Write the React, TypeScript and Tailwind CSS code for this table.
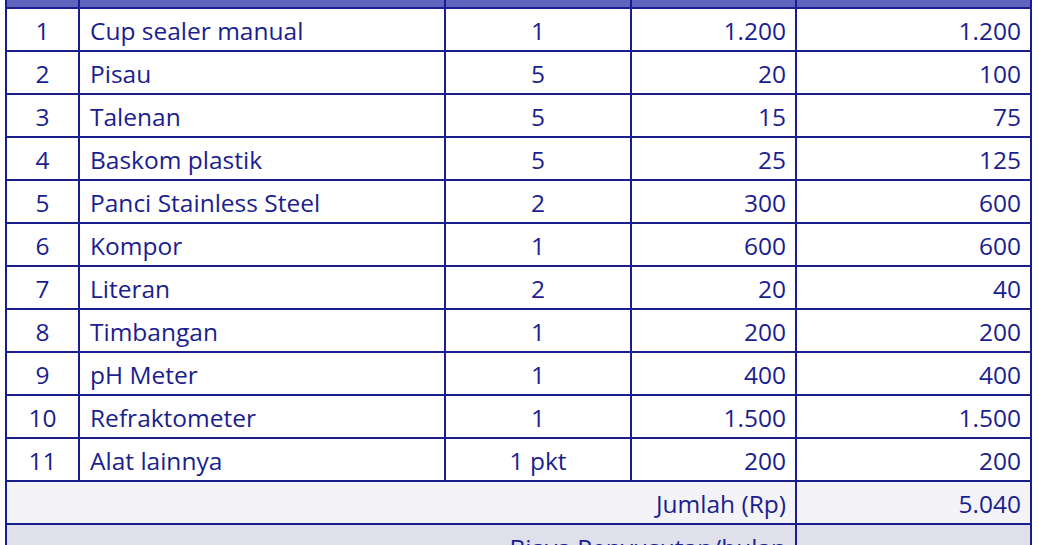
const rows: [string, string, string, string, string][] = [
  ["1", "Cup sealer manual", "1", "1.200", "1.200"],
  ["2", "Pisau", "5", "20", "100"],
  ["3", "Talenan", "5", "15", "75"],
  ["4", "Baskom plastik", "5", "25", "125"],
  ["5", "Panci Stainless Steel", "2", "300", "600"],
  ["6", "Kompor", "1", "600", "600"],
  ["7", "Literan", "2", "20", "40"],
  ["8", "Timbangan", "1", "200", "200"],
  ["9", "pH Meter", "1", "400", "400"],
  ["10", "Refraktometer", "1", "1.500", "1.500"],
  ["11", "Alat lainnya", "1 pkt", "200", "200"],
];

const cols = "grid grid-cols-[73px_366px_186px_165px_233px]";
const line = "border-r-2 border-[#1a1d8c]";

export default function App() {
  return (
    <div className="w-[1038px] h-[545px] overflow-hidden bg-white font-['Open_Sans',sans-serif] text-[24.5px] text-[#1a1e8e]">
      <div className="ml-[5px] w-[1027px] border-x-2 border-[#1a1d8c]">
        {/* tail of the header row */}
        <div className={`${cols} h-[9px] border-b-2 border-[#1a1d8c] bg-[#5e63bd]`}>
          <div className={line} />
          <div className={line} />
          <div className={line} />
          <div className={line} />
          <div />
        </div>

        {rows.map(([no, name, qty, price, total]) => (
          <div key={no} className={`${cols} h-[43px] border-b-2 border-[#1a1d8c]`}>
            <div className={`flex items-center justify-center pt-[4px] ${line}`}>{no}</div>
            <div className={`flex items-center pl-[10px] pt-[4px] ${line}`}>{name}</div>
            <div className={`flex items-center justify-center pt-[4px] ${line}`}>{qty}</div>
            <div className={`flex items-center justify-end pr-[9px] pt-[4px] ${line}`}>{price}</div>
            <div className="flex items-center justify-end pr-[9px] pt-[4px]">{total}</div>
          </div>
        ))}

        <div className="grid grid-cols-[790px_233px] h-[43px] border-b-2 border-[#1a1d8c] bg-[#f4f4f8]">
          <div className={`flex items-center justify-end pr-[9px] pt-[4px] ${line}`}>Jumlah (Rp)</div>
          <div className="flex items-center justify-end pr-[9px] pt-[4px]">5.040</div>
        </div>

        <div className="grid grid-cols-[790px_233px] h-[43px] bg-[#dfe0ec]">
          <div className={`flex items-center justify-end pr-[9px] pt-[4px] ${line}`}>Biaya Penyusutan/bulan</div>
          <div />
        </div>
      </div>
    </div>
  );
}
